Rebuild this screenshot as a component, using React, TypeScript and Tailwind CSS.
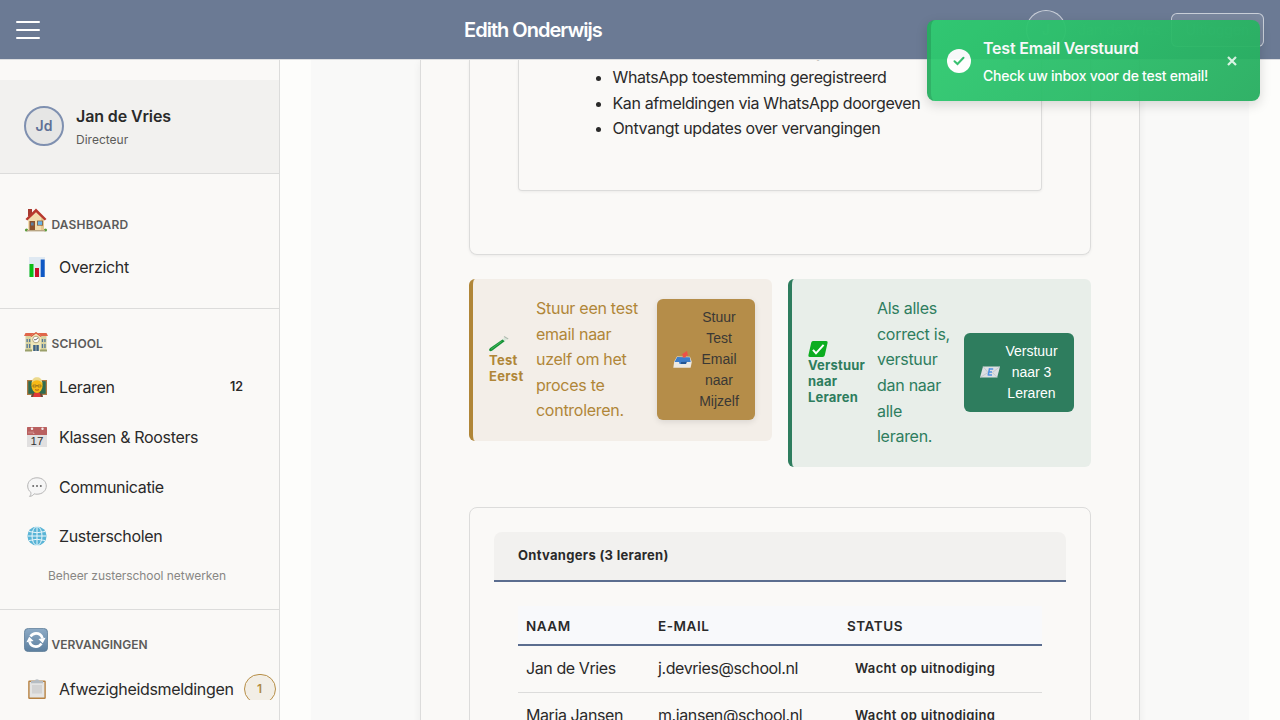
import type { ReactNode } from 'react';
import { clsx } from 'clsx';

type IconProps = { className?: string };

function HouseIcon({ className }: IconProps) {
  return (
    <svg viewBox="0 0 24 24" className={className}>
      <path d="M4 1h4v7H4z" fill="#a63a30" />
      <path d="M4 11 12 3l8 8v11H4z" fill="#f1dcae" />
      <path d="M12 3l8 8v11h-3V9z" fill="#e5c88f" />
      <path d="M1.500 11 12 .6 22.500 11l-1.800 1.600L12 4.300 3.300 12.600z" fill="#b8392f" />
      <rect x="5.5" y="13" width="5.500" height="9.5" fill="#8a4f2b" />
      <rect x="7" y="14.5" width="2.6" height="3" fill="#5b7fa3" />
      <rect x="13" y="12.6" width="6" height="5" fill="#8a5a35" />
      <rect x="13.8" y="13.3" width="4.4" height="3.6" fill="#67b4e8" />
      <circle cx="2.5" cy="22" r="1.6" fill="#5b9a3c" />
      <circle cx="21.5" cy="22" r="1.6" fill="#5b9a3c" />
      <path d="M3 22h18v1.4H3z" fill="#b9a684" />
    </svg>
  );
}

function ChartIcon({ className }: IconProps) {
  return (
    <svg viewBox="0 0 20 20" className={className}>
      <rect x="2" y="0" width="16" height="20" fill="#dfe9f2" />
      <rect x="2.5" y="7" width="4" height="13" fill="#09bd16" />
      <rect x="8" y="11" width="4" height="9" fill="#c8102a" />
      <rect x="13.7" y="2.5" width="4" height="17.5" fill="#0f58c4" />
    </svg>
  );
}

function SchoolIcon({ className }: IconProps) {
  return (
    <svg viewBox="0 0 24 24" className={className}>
      <path d="M1.5 5h21v16h-21z" fill="#d9d3a0" />
      <path d="M0 6 1.5 3h21L24 6z" fill="#e0664a" />
      <path d="M7 5.5 12 2l5 3.5V21H7z" fill="#efe6b8" />
      <path d="M6.5 6 12 2l5.5 4-.8.9L12 3.6 7.3 6.9z" fill="#d9553c" />
      <path d="M2.5 9h1.3v3H2.5zm2.5 0h1.3v3H5zm-2.5 5h1.3v4H2.5zM5 14h1.3v4H5zM17.8 9h1.3v3h-1.3zm2.5 0h1.3v3h-1.3zm-2.5 5h1.3v4h-1.3zm2.5 0h1.3v4h-1.3z" fill="#53789b" />
      <circle cx="12" cy="9.5" r="3.3" fill="#fff" stroke="#a4946a" strokeWidth=".8" />
      <path d="M12 9.7 14 7.8M12 9.7H10" stroke="#444" strokeWidth=".8" />
      <rect x="9.2" y="15" width="5.6" height="6" fill="#3c6186" />
      <path d="M12 15v6" stroke="#e5dcae" strokeWidth=".7" />
      <path d="M1 19.5h7V21.5H1zM16 19.5h7v2h-7z" fill="#9aa06a" />
    </svg>
  );
}

function TeacherIcon({ className }: IconProps) {
  return (
    <svg viewBox="0 0 20 20" className={className}>
      <rect x="0" y="3" width="20" height="15" fill="#b07a43" />
      <rect x="1.3" y="4.2" width="17.4" height="12.6" fill="#2e6b50" />
      <path d="M4 20c0-3 2-4.5 6-4.5s6 1.5 6 4.5z" fill="#6b4a38" />
      <path d="M7.5 15.5h5L14 20H6z" fill="#e03a3a" />
      <ellipse cx="10" cy="8.5" rx="5.6" ry="7.4" fill="#f7b917" />
      <path d="M4.6 6.5C4.8 2 7 .2 10 .2s5.200 1.800 5.400 6.300C14 4.300 12.200 3.300 10 3.300S6 4.300 4.600 6.500z" fill="#ecd98c" />
      <path d="M6 8h3v2H6zM11 8h3v2h-3zM9 8.600h2" fill="none" stroke="#7a5a1c" strokeWidth=".6" />
      <path d="M8 12.700q2 1 4 0" fill="none" stroke="#9a4b1c" strokeWidth=".8" />
    </svg>
  );
}

function CalendarIcon({ className }: IconProps) {
  return (
    <svg viewBox="0 0 20 20" className={className}>
      <rect width="20" height="20" rx=".6" fill="#e1e0e0" />
      <rect width="20" height="8" rx=".6" fill="#b9605f" />
      <path d="M2 6.5V4.5M4 6.5v-2M6 4.5v2h1.500" stroke="#e5b8b6" strokeWidth=".7" fill="none" />
      <circle cx="5" cy="1.8" r="1.2" fill="#f4eeee" />
      <circle cx="15.5" cy="1.8" r="1.2" fill="#f4eeee" />
      <text x="10" y="18" textAnchor="middle" fontSize="11.5" fontFamily="Liberation Sans, sans-serif" fill="#333">17</text>
    </svg>
  );
}

function SpeechIcon({ className }: IconProps) {
  return (
    <svg viewBox="0 0 20 20" className={className}>
      <path d="M10 .8c5.500 0 9.300 3.600 9.300 8.200s-3.800 8.200-9.300 8.200c-1 0-2-.1-2.800-.4-1 1.500-2.600 2.500-4.700 2.600 1.100-1 1.600-2.400 1.400-4C1.800 13.900.7 11.700.7 9 .7 4.400 4.500.8 10 .8z" fill="#f6f6f6" stroke="#b5b5b5" strokeWidth="1" />
      <circle cx="6.2" cy="9" r="1" fill="#666" />
      <circle cx="10" cy="9" r="1" fill="#666" />
      <circle cx="13.8" cy="9" r="1" fill="#666" />
    </svg>
  );
}

function GlobeIcon({ className }: IconProps) {
  return (
    <svg viewBox="0 0 20 20" className={className}>
      <circle cx="10" cy="10" r="9.6" fill="#58b4d6" />
      <g fill="none" stroke="#eaf7fb" strokeWidth="1">
        <path d="M10 .5v19M.5 10h19M2 5.500q8 2.500 16 0M2 14.500q8-2.500 16 0" />
        <ellipse cx="10" cy="10" rx="5" ry="9.500" />
      </g>
    </svg>
  );
}

function CycleIcon({ className }: IconProps) {
  return (
    <svg viewBox="0 0 24 24" className={className}>
      <defs>
        <linearGradient id="cycle" x1="0" y1="0" x2="0" y2="1">
          <stop offset="0" stopColor="#8dabc6" />
          <stop offset="1" stopColor="#5c7f9f" />
        </linearGradient>
      </defs>
      <rect x=".4" y=".4" width="23.2" height="23.2" rx="4" fill="url(#cycle)" stroke="#587894" strokeWidth=".8" />
      <path d="M6.500 8.500C8 6.300 9.800 5.400 12 5.400c3.200 0 5.600 1.900 6.500 5M17.500 15.500c-1.500 2.200-3.300 3.100-5.500 3.100-3.200 0-5.600-1.900-6.500-5" fill="none" stroke="#fff" strokeWidth="2.6" />
      <path d="M2.400 14.200 5.200 8.800 9.600 13zM21.600 9.800l-2.800 5.400L14.400 11z" fill="#fff" />
    </svg>
  );
}

function ClipboardIcon({ className }: IconProps) {
  return (
    <svg viewBox="0 0 20 20" className={className}>
      <rect x="1.2" y="1.5" width="17.6" height="18.5" rx="1.3" fill="#b78242" />
      <rect x="2.600" y="3" width="14.800" height="15.5" fill="#e4e4e3" />
      <path d="M5 6h10v8.500H5z" fill="#d3d3d3" />
      <path d="M4 1.800h3.500Q8 .2 10 .2t2.500 1.600H16v2.400H4z" fill="#b5bcc2" />
    </svg>
  );
}

function TestTubeIcon({ className }: IconProps) {
  return (
    <svg viewBox="0 0 20 17" className={className}>
      <path d="M16 2.500 18 4.500 3 15.800q-1.800.9-2.700-.2-.6-1.300.9-2.700z" fill="#d7e5d9" />
      <path d="M13.500 4.400 15.600 6.200 3 15.800q-1.800.9-2.700-.2-.6-1.300.9-2.700z" fill="#149136" />
      <path d="M12.500 6.500 2 14.300" stroke="#5bc76c" strokeWidth=".7" />
      <path d="m15 1.500 4.200 2.600" stroke="#aebbb0" strokeWidth="1.200" />
    </svg>
  );
}

function CheckBoxIcon({ className }: IconProps) {
  return (
    <svg viewBox="0 0 20 16" className={className}>
      <path d="M5 0h13.200Q20 0 19.600 1.800L16.800 14.200Q16.400 16 14.600 16H1.700Q0 16 .4 14.200L3.200 1.800Q3.600 0 5 0z" fill="#0cad20" />
      <path d="M5 8.800 8 12.300 15.600 3.800" fill="none" stroke="#fff" strokeWidth="2" />
    </svg>
  );
}

function OutboxIcon({ className }: IconProps) {
  return (
    <svg viewBox="0 0 19 17" className={className}>
      <path d="m4 5.500 13 .2L18.800 11l-1.200 5.700H.3l.9-6.200z" fill="#ece9e3" />
      <path d="m4.200 6 12.600.2.900 4.800H12l-1 2H6.600L6 11H1.500z" fill="#3c7dca" />
      <path d="m8 11 6-.2-1 2.200H8z" fill="#235594" />
      <path d="M9.500 6.500 10 4 8.500 3.500 14 0l1 5-1.700-.4-.8 2z" fill="#ed5147" />
    </svg>
  );
}

function EmailIcon({ className }: IconProps) {
  return (
    <svg viewBox="0 0 20 12" className={className}>
      <path d="M3 .5h17L17.200 11.500H0z" fill="#dcdfe2" />
      <path d="m3 .5 5 6-8 5M20 .5l-7.500 6 4.700 5" fill="none" stroke="#b5bbc1" strokeWidth=".6" />
      <path d="M8.800 2.900h4.400M8.200 6h3.800M7.600 9.100H12M9.500 2.600 8.200 9.400" stroke="#4f92e2" strokeWidth="1.500" fill="none" />
    </svg>
  );
}

function SectionTitle({ icon, className, children }: { icon: ReactNode; className?: string; children: ReactNode }) {
  return (
    <div className="flex h-6 items-start px-6">
      {icon}
      <span className={clsx('ml-[3.5px] text-xs font-semibold leading-[18px] text-[#5c5b59]', className)}>{children}</span>
    </div>
  );
}

function NavItem({ icon, label, children }: { icon: ReactNode; label: string; children?: ReactNode }) {
  return (
    <a className="flex h-[26px] items-center pl-[27px]">
      {icon}
      <span className="ml-3 text-base tracking-[-0.33px] text-[#2a2a2a]">{label}</span>
      {children}
    </a>
  );
}

function Sidebar() {
  return (
    <aside className="h-[660px] w-[280px] shrink-0 border-r border-[#dcdcdb] bg-[#faf9f7] pt-5">
      <div className="h-[620px] overflow-hidden">
        <div className="flex h-[94px] items-center gap-3 border-b border-[#dcdcdb] bg-[#f2f1ef] px-6 pb-px">
          <div className="flex h-10 w-10 items-center justify-center rounded-full border-2 border-[#7f90b0] bg-[#e6e6e5] text-sm font-semibold text-[#5f7096]">
            Jd
          </div>
          <div className="pt-0.5">
            <div className="text-base font-semibold leading-6 tracking-[-0.12px] text-[#2a2a2a]">Jan de Vries</div>
            <div className="mt-0.5 text-xs leading-5 text-[#5c5b59]">Directeur</div>
          </div>
        </div>

        <div className="h-[135px] border-b border-[#dcdcdb] pt-[34px]">
          <SectionTitle icon={<HouseIcon className="h-6 w-6" />} className="mt-2 tracking-[0.15px]">DASHBOARD</SectionTitle>
          <div className="mt-[22px]">
            <NavItem icon={<ChartIcon className="h-5 w-5 shrink-0" />} label="Overzicht" />
          </div>
        </div>

        <div className="h-[301px] border-b border-[#dcdcdb] pt-[21px]">
          <SectionTitle icon={<SchoolIcon className="h-6 w-6" />} className="mt-[5px] tracking-[0.1px]">SCHOOL</SectionTitle>
          <div className="mt-5 flex flex-col gap-[23.8px]">
            <NavItem icon={<TeacherIcon className="h-5 w-5 shrink-0" />} label="Leraren">
              <span className="ml-auto mr-9 text-[12.5px] font-semibold text-[#2a2a2a]">12</span>
            </NavItem>
            <NavItem icon={<CalendarIcon className="h-5 w-5 shrink-0" />} label="Klassen & Roosters" />
            <NavItem icon={<SpeechIcon className="h-5 w-5 shrink-0" />} label="Communicatie" />
            <NavItem icon={<GlobeIcon className="h-5 w-5 shrink-0" />} label="Zusterscholen" />
          </div>
          <div className="mt-[17.5px] pl-12 text-xs leading-[18px] tracking-[-0.07px] text-[#888784]">Beheer zusterschool netwerken</div>
        </div>

        <div className="pt-[18px]">
          <SectionTitle icon={<CycleIcon className="h-6 w-6" />} className="mt-2">VERVANGINGEN</SectionTitle>
          <div className="mt-6">
            <NavItem icon={<ClipboardIcon className="h-5 w-5 shrink-0" />} label="Afwezigheidsmeldingen">
              <span className="ml-[10px] flex h-[30px] w-8 shrink-0 items-center justify-center rounded-full border border-[#b78f48] bg-[#f2eee6] text-xs font-semibold text-[#b08a45]">
                1
              </span>
            </NavItem>
          </div>
        </div>
      </div>
    </aside>
  );
}

function Header() {
  return (
    <header className="flex h-[60px] items-center border-b border-[#dcdde0] bg-[#6b7a94] px-4">
      <button className="flex h-[18px] w-6 flex-col justify-between">
        <span className="h-0.5 w-6 rounded bg-white" />
        <span className="h-0.5 w-6 rounded bg-white" />
        <span className="h-0.5 w-6 rounded bg-white" />
      </button>
      <h1 className="ml-[424px] text-xl font-semibold tracking-[-0.98px] text-white">Edith Onderwijs</h1>
      <div className="ml-auto flex h-10 w-10 items-center justify-center rounded-full border border-white/60 bg-white/10 text-sm text-white/30">J</div>
      <span className="ml-3 w-[93px] text-sm text-white/20">Jan de Vries</span>
      <button className="h-[34px] w-[93px] rounded-md border border-white/60 bg-white/10 text-sm text-white/20">Uitloggen</button>
    </header>
  );
}

const benefits = [
  'Accounts direct na activering',
  'WhatsApp toestemming geregistreerd',
  'Kan afmeldingen via WhatsApp doorgeven',
  'Ontvangt updates over vervangingen',
];

const recipients = [
  { name: 'Jan de Vries', email: 'j.devries@school.nl' },
  { name: 'Maria Jansen', email: 'm.jansen@school.nl' },
  { name: 'Piet Bakker', email: 'p.bakker@school.nl' },
];

function Toast() {
  return (
    <div className="absolute left-[927px] top-5 flex h-[81px] w-[333px] items-center rounded-lg border-l-4 border-[#27ae60] bg-linear-135 from-[#2ecc71] to-[#27ae60] pl-4 opacity-95 shadow-[0_4px_12px_rgba(0,0,0,0.15)]">
      <div className="flex h-6 w-6 items-center justify-center rounded-full bg-white">
        <svg viewBox="0 0 12 10" className="h-[10px] w-3" fill="none" stroke="#2ebd69" strokeWidth="2" strokeLinecap="round">
          <path d="M1.500 5.200 4.500 8 10.500 1.800" />
        </svg>
      </div>
      <div className="ml-3 w-[232px] whitespace-nowrap text-white">
        <div className="text-base font-semibold leading-6 tracking-[-0.2px]">Test Email Verstuurd</div>
        <div className="mt-1.5 text-sm font-medium leading-5 tracking-[-0.26px]">Check uw inbox voor de test email!</div>
      </div>
      <button className="ml-3">
        <svg viewBox="0 0 10 10" className="h-[10px] w-[10px]" stroke="#d9f5e4" strokeWidth="2.200">
          <path d="m1 1 8 8M9 1 1 9" />
        </svg>
      </button>
    </div>
  );
}

export default function App() {
  return (
    <div className="relative h-[720px] w-[1280px] overflow-hidden bg-[#fdfdfb] font-['Inter',sans-serif] text-[#2a2a2a]">
      <Header />
      <div className="flex h-[660px] overflow-hidden">
        <Sidebar />
        <main className="ml-[31px] w-[938px] shrink-0 bg-[#f9f9f8] pl-[109px]">
          <div className="h-[700px] w-[720px] border-x border-[#dcdcdb] bg-[#faf9f7] px-12 shadow-[0_2px_8px_rgba(0,0,0,0.06)]">
            <div className="h-[195px] rounded-b-lg border border-t-0 border-[#dcdcdb] px-12 shadow-[0_1px_3px_rgba(0,0,0,0.06)]">
              <div className="h-[131px] overflow-hidden rounded-b border border-t-0 border-[#dcdcdb] shadow-[0_1px_3px_rgba(0,0,0,0.06)]">
                <ul className="-mt-[20.7px] list-disc pl-[93.5px] text-base leading-[25.6px] tracking-[-0.38px]">
                  {benefits.map((item) => (
                    <li key={item}>{item}</li>
                  ))}
                </ul>
              </div>
            </div>

            <div className="mt-6 flex h-[188px] items-start gap-4">
              <div className="flex h-[162px] w-[303px] items-center rounded-md border-l-4 border-[#b08638] bg-[#f3eee8] pl-4 text-[#b08638]">
                <div className="w-[47px] shrink-0 pb-0.5 text-[13px] font-bold leading-4 tracking-[0.3px]">
                  <TestTubeIcon className="h-[17px] w-5" />
                  Test Eerst
                </div>
                <p className="w-[121px] shrink-0 pr-2 text-base leading-[25.6px] tracking-[-0.27px]">
                  Stuur een test<br />email naar<br />uzelf om het<br />proces te<br />controleren.
                </p>
                <button className="-mt-0.5 flex h-[121px] w-[98px] items-center rounded-md bg-[#b58d49] pl-4 font-['Liberation_Sans',sans-serif] text-sm leading-[21px] text-[#3a3835] shadow-[0_2px_6px_rgba(0,0,0,0.1)]">
                  <OutboxIcon className="h-[17px] w-[19px] shrink-0" />
                  <span className="ml-[7px] w-10 text-center">Stuur Test Email naar Mijzelf</span>
                </button>
              </div>

              <div className="flex h-[188px] w-[303px] items-center rounded-md border-l-4 border-[#2e7d5e] bg-[#e8eee9] pl-4 text-[#2e7d5e]">
                <div className="w-[69px] shrink-0 text-[13px] font-bold leading-4 tracking-[0.2px]">
                  <CheckBoxIcon className="h-4 w-5" />
                  Verstuur naar Leraren
                </div>
                <p className="w-[87px] shrink-0 text-base leading-[25.6px] tracking-[-0.27px]">
                  Als alles<br />correct is,<br />verstuur<br />dan naar<br />alle<br />leraren.
                </p>
                <button className="-mt-0.5 flex h-[79px] w-[110px] items-center rounded-md bg-[#2e7d5e] pl-4 font-['Liberation_Sans',sans-serif] text-sm leading-[21px] text-white">
                  <EmailIcon className="h-3 w-5 shrink-0" />
                  <span className="ml-1 w-[55px] text-center">Verstuur naar 3 Leraren</span>
                </button>
              </div>
            </div>

            <div className="mt-10 h-[260px] rounded-lg border border-[#dcdcdb] p-6">
              <div className="h-[50px] rounded-t-lg border-b-2 border-[#5b6d8f] bg-[#f2f1ef] px-6 text-[13px] font-bold leading-[46px] tracking-[0.3px]">
                Ontvangers (3 leraren)
              </div>
              <div className="px-6 pt-6">
                <table className="w-[524px] table-fixed border-collapse text-left">
                  <thead>
                    <tr className="h-[39px] border-b-2 border-[#5b6d8f] bg-[#f8f9fb] text-[13.5px] font-semibold tracking-[0.55px]">
                      <th className="w-[132px] px-2 pt-0.5 font-semibold">NAAM</th>
                      <th className="w-[189px] px-2 pt-0.5 font-semibold">E-MAIL</th>
                      <th className="px-2 pt-0.5 font-semibold">STATUS</th>
                    </tr>
                  </thead>
                  <tbody>
                    {recipients.map((r) => (
                      <tr key={r.name} className="h-[47px] border-b border-[#dcdcdb] text-base tracking-[-0.41px]">
                        <td className="px-2 pb-0.5">{r.name}</td>
                        <td className="px-2 pb-0.5">{r.email}</td>
                        <td className="px-4 text-[13px] font-semibold tracking-[0.33px]">Wacht op uitnodiging</td>
                      </tr>
                    ))}
                  </tbody>
                </table>
              </div>
            </div>
          </div>
        </main>
      </div>
      <Toast />
    </div>
  );
}
